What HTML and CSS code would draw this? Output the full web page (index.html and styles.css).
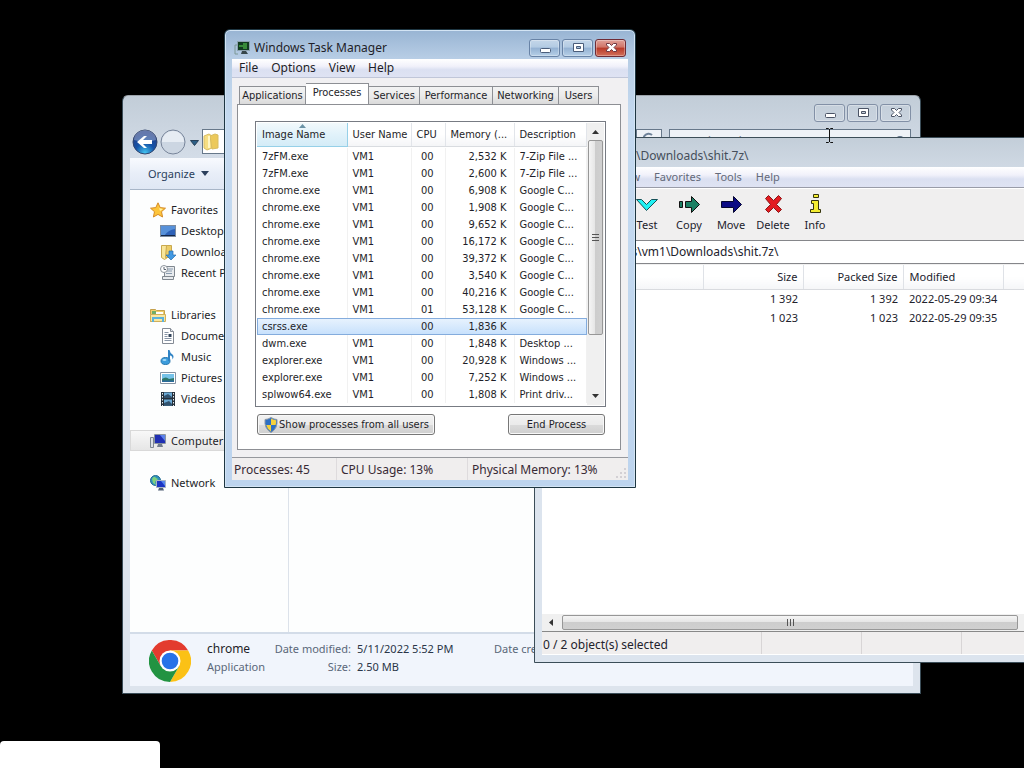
FILE: index.html
```html
<!DOCTYPE html>
<html lang="en">
<head>
    <meta charset="UTF-8">
    <meta name="viewport" content="width=device-width, initial-scale=1.0">
    <title>Desktop</title>
    <link rel="stylesheet" href="styles.css">
</head>
<body>
    <div class="desktop">

        <!-- Explorer -->
        <section class="window explorer">
            <div class="title-bar">
                <div class="window-buttons">
                    <button aria-label="Minimize"><svg width="14" height="14"><rect x="2.5" y="7.500" width="10" height="4" rx="1" fill="#fff" stroke="#4a5365"/></svg></button>
                    <button aria-label="Maximize"><svg width="14" height="14"><path d="M2.500 2.500h10v8h-10zM5.500 5.500h4v2h-4z" fill="#fff" fill-rule="evenodd" stroke="#4a5365"/></svg></button>
                    <button aria-label="Close"><svg width="14" height="14"><path d="M2.500 2.500h3l2 2 2-2h3v1.500L10 6.500l2.500 2.500v1.500h-3l-2-2-2 2h-3V9L5 6.500 2.500 4z" fill="#fff" stroke="#4a5365"/></svg></button>
                </div>
            </div>
            <div class="nav-bar">
                <button class="round" aria-label="Back"><svg width="26" height="26"><defs><radialGradient id="back" cx=".5" cy=".95" r=".8"><stop offset="0" stop-color="#43c6f2"/><stop offset=".5" stop-color="#1553a8"/><stop offset="1" stop-color="#23408a"/></radialGradient></defs><circle cx="13" cy="13" r="12" fill="url(#back)" stroke="#33466e"/><path d="M2 11a11 10 0 0 1 22 0q-11 3-22 0" fill="#fff" opacity=".3"/><path d="M5 13l7-6h3l-4 4h9v4h-9l4 4h-3z" fill="#fff"/></svg></button>
                <button class="round" aria-label="Forward"><svg width="26" height="26"><circle cx="13" cy="13" r="12" fill="#ccd6e2" stroke="#78859a"/><path d="M2 13a11 11 0 0 1 22 0z" fill="#e6ecf3"/></svg></button>
                <button class="recent" aria-label="Recent pages"><svg width="9" height="6"><path d="M.5.5h8l-4 5z" fill="#2c5f86" stroke="#274058"/></svg></button>
                <div class="address">
                    <svg width="16" height="18"><path d="M1 3l5-2 3 2v12l-5 2-3-2z" fill="#f6de83" stroke="#d9bd62"/><path d="M7 3l5-2 3 1v13l-6 1z" fill="#ecc95b" stroke="#d9bd62"/><path d="M6 3v12" stroke="#fff5c2" stroke-width="2"/></svg>
                    <button class="refresh" aria-label="Refresh"><svg width="12" height="14"><path d="M9 3a5 5 0 1 0 1 6" fill="none" stroke="#6e8299" stroke-width="2"/></svg></button>
                </div>
                <label class="search"><input type="search" aria-label="Search Application" placeholder="Search Application"><svg width="12" height="14"><circle cx="6" cy="6" r="4" fill="none" stroke="#5e7188" stroke-width="2"/></svg></label>
            </div>
            <div class="command-bar">
                <button>Organize <svg width="8" height="5"><path d="M0 0h8L4 5z" fill="#2b3f5c"/></svg></button>
            </div>
            <div class="explorer-body">
                <nav class="sidebar">
                    <div class="group">
                        <a href="#"><svg width="16" height="16"><path d="M8 .8l2.200 4.800 5.300.6-4 3.500 1.100 5.300L8 12.400 3.400 15l1.100-5.300-4-3.500 5.300-.6z" fill="#fdc53b" stroke="#d58b28"/><path d="M8 3l1.200 3.300L13 7l-3 2z" fill="#fff3a3"/></svg>Favorites</a>
                        <a href="#" class="child"><svg width="16" height="16"><rect x=".5" y="2.500" width="15" height="11" fill="#2e62b8" stroke="#7c8ca0"/><path d="M1 3h14v3Q8 7 4 13H1z" fill="#5791d9"/><path d="M1 12.500h14" stroke="#142748"/></svg>Desktop</a>
                        <a href="#" class="child"><svg width="16" height="16"><path d="M1.500 1.500h6v12l-3 2-3-2z" fill="#f8e69a" stroke="#c9a94f"/><path d="M6.500 1.500h5v12h-6z" fill="#eccd67" stroke="#c9a94f"/><path d="M9 7h4v4h3l-5 5-5-5h3z" fill="#4199e3" stroke="#286fac" stroke-width=".7"/></svg>Downloads</a>
                        <a href="#" class="child"><svg width="16" height="16"><path d="M4.500 1.500h10v10h-10zM2.500 11.500h11v3h-11z" fill="#e8ebee" stroke="#808890"/><path d="M6 6h6M6 8.500h6M8 4h5" stroke="#899bae"/><circle cx="4" cy="4" r="3.500" fill="#fff" stroke="#8b939b"/><path d="M4 2v2.500h2" fill="none" stroke="#58636f"/></svg>Recent Places</a>
                    </div>
                    <div class="group">
                        <a href="#"><svg width="16" height="16"><path d="M.5 2.500h5l1 1h8v11H.5z" fill="#f0cf6c" stroke="#c5a14d"/><path d="M2 4h4v3H2z" fill="#71ad68"/><path d="M6 5h7v3H6z" fill="#fff"/><path d="M.5 7.500h15v7H.5z" fill="#f9e7a0" stroke="#d0b05b"/><path d="M3 15v-4h10v4" fill="none" stroke="#5bb2dd" stroke-width="2"/></svg>Libraries</a>
                        <a href="#" class="child"><svg width="16" height="16"><path d="M2.500.5h8l3 3v12h-11z" fill="#fff" stroke="#848b95"/><path d="M10.500.5v3h3" fill="#dde2ea" stroke="#848b95"/><path d="M4.500 4.500h4M4.500 6.500h3M4.500 8.500h3M4.500 10.500h7M4.500 12.500h7" stroke="#8794a5"/><path d="M8.500 6h3v3h-3z" fill="#33455c"/></svg>Documents</a>
                        <a href="#" class="child"><svg width="16" height="16"><ellipse cx="5.500" cy="12" rx="4.500" ry="3.500" fill="#3b9cdc" stroke="#2576ae"/><path d="M8 12V1h1.500q.5 3 3 4.500 2 2 0 5 0-4-2.500-4V12z" fill="#2f83c4"/><ellipse cx="4.500" cy="11" rx="2" ry="1" fill="#a3daf8"/></svg>Music</a>
                        <a href="#" class="child"><svg width="16" height="16"><path d="M.5 2.500h15v11H.5z" fill="#fff" stroke="#8492a2"/><path d="M2 4h12v8H2z" fill="#75c2e8"/><path d="M2 9q4-3 7 0l5-1v4H2z" fill="#2e7769"/><path d="M2 10.500h12V12H2z" fill="#2a6a9c"/></svg>Pictures</a>
                        <a href="#" class="child"><svg width="16" height="16"><path d="M1 1h14v14H1z" fill="#25303b"/><path d="M4 1.500h8V7H4zM4 8.500h8v6H4z" fill="#6baad5"/><path d="M4 5l4-2 4 3v1H4zM4 12l5-2 3 3v1.500H4z" fill="#31526f"/><path d="M2.500 2v13M13.500 2v13" stroke="#e9edf0" stroke-dasharray="1.500 1.500"/></svg>Videos</a>
                    </div>
                    <div class="group">
                        <a href="#" class="current"><svg width="16" height="16"><path d="M.5 4.500h3v10h-3z" fill="#dce1e7" stroke="#7d8792"/><path d="M4.500 1.500h11v9h-11z" fill="#fff" stroke="#8993a0"/><path d="M5 2h10v8H5z" fill="#202fb3"/><path d="M10 2h5v6z" fill="#5c82ea"/><path d="M8 11h4l1 3H7z" fill="#717c8c"/></svg>Computer</a>
                    </div>
                    <div class="group">
                        <a href="#"><svg width="16" height="16"><circle cx="5.500" cy="5.500" r="5" fill="#2f91bd" stroke="#226b90"/><path d="M2 4q2-4 4-1l2 1-3 3 1 3-3-2z" fill="#80d17e"/><path d="M6.500 5.500h9v7h-9z" fill="#1c35c4" stroke="#a9b4c4"/><path d="M11 6h4v5z" fill="#5787ef"/><path d="M9 13h4l1 2.500H8z" fill="#536177"/></svg>Network</a>
                    </div>
                </nav>
                <main class="file-area"></main>
            </div>
            <div class="details">
                <svg class="chrome-logo" viewBox="0 0 48 48"><circle cx="24" cy="24" r="24" fill="#fff"/><path d="M24 12h20.800A24 24 0 0 0 3.200 12l10.400 18z" fill="#e33b2e"/><path d="M34.400 30L24 48A24 24 0 0 0 44.800 12H24z" fill="#fbc116"/><path d="M13.600 30L3.200 12A24 24 0 0 0 24 48l10.400-18z" fill="#229342"/><circle cx="24" cy="24" r="12" fill="#fff"/><circle cx="24" cy="24" r="9.500" fill="#2672e8"/></svg>
                <div class="file-name"><strong>chrome</strong><span>Application</span></div>
                <dl>
                    <dt>Date modified:</dt><dd>5/11/2022 5:52 PM</dd>
                    <dt>Size:</dt><dd>2.50 MB</dd>
                </dl>
                <span class="created">Date created:</span>
            </div>
        </section>

        <!-- 7-Zip -->
        <section class="window archive">
            <div class="title-bar"><h2>\Downloads\shit.7z\</h2></div>
            <div class="menu-bar">
                <button>View</button><button>Favorites</button><button>Tools</button><button>Help</button>
            </div>
            <div class="toolbar">
                <button><svg width="24" height="24"><path d="M1.500 7.500h5l5 5 5-5h6l-11 11z" fill="#1ff2f4" stroke="#165057"/></svg>Test</button>
                <button><svg width="24" height="24"><path d="M2.500 9.500h3v6h-3zM8.500 9.500h6v-5l8 8-8 8v-5h-6z" fill="#1c8064" stroke="#111"/></svg>Copy</button>
                <button><svg width="24" height="24"><path d="M2.500 9.500h12v-5l8 8-8 8v-5h-12z" fill="#0b0a84" stroke="#050530"/></svg>Move</button>
                <button><svg width="24" height="24"><path d="M4.500 6.500l3-3 5 5 5-5 3 3-5 6 5 5-3 3-5-5-5 5-3-3 5-5z" fill="#e31b20" stroke="#8b1517"/></svg>Delete</button>
                <button><svg width="24" height="24"><path d="M10.500 2.500h5v3h-5zM8.500 8.500h7v9h2v3h-10v-3h3v-6h-2z" fill="#f4ed32" stroke="#35340e"/></svg>Info</button>
            </div>
            <div class="path-row"><input type="text" aria-label="Path" value="C:\Users\vm1\Downloads\shit.7z\"></div>
            <div class="archive-list">
                <table>
                    <thead>
                        <tr><th class="name"></th><th>Size</th><th>Packed Size</th><th class="modified">Modified</th><th class="rest"></th></tr>
                    </thead>
                    <tbody>
                        <tr><td></td><td>1 392</td><td>1 392</td><td class="modified">2022-05-29 09:34</td><td></td></tr>
                        <tr><td></td><td>1 023</td><td>1 023</td><td class="modified">2022-05-29 09:35</td><td></td></tr>
                    </tbody>
                </table>
            </div>
            <div class="scroll-x">
                <svg width="17" height="9"><path d="M11 1v7L7 4.500z" fill="#333"/></svg>
                <div class="thumb"><svg width="9" height="7"><path d="M1.500 0v7M4.500 0v7M7.500 0v7" stroke="#555"/></svg></div>
                <svg width="17" height="9"><path d="M7 1v7l4-3.500z" fill="#333"/></svg>
            </div>
            <div class="status-bar"><span>0 / 2 object(s) selected</span><span></span><span></span><span></span></div>
        </section>

        <!-- Task Manager -->
        <section class="window task-manager">
            <div class="title-bar">
                <svg width="16" height="16"><path d="M3.500 1.500h12v9h-12z" fill="#123b20" stroke="#8da3b0"/><path d="M5 5h4V3h4v6H9V7H5z" fill="#378b38"/><path d="M8 11h4l2 3H7z" fill="#36464a"/><path d="M3 5H1v9h3" fill="none" stroke="#7c9895"/></svg>
                <h2>Windows Task Manager</h2>
                <div class="window-buttons">
                    <button aria-label="Minimize"><svg width="14" height="14"><rect x="2.500" y="7.500" width="10" height="4" rx="1" fill="#fff" stroke="#4a5d7a"/></svg></button>
                    <button aria-label="Maximize"><svg width="14" height="14"><path d="M2.500 2.500h10v8h-10zM5.500 5.500h4v2h-4z" fill="#fff" fill-rule="evenodd" stroke="#4a5d7a"/></svg></button>
                    <button class="close" aria-label="Close"><svg width="14" height="14"><path d="M2.500 2.500h3l2 2 2-2h3v1.500L10 6.500l2.500 2.500v1.500h-3l-2-2-2 2h-3V9L5 6.500 2.500 4z" fill="#fff" stroke="#703a44"/></svg></button>
                </div>
            </div>
            <div class="menu-bar">
                <button>File</button><button>Options</button><button>View</button><button>Help</button>
            </div>
            <div class="tab-area">
                <div class="tabs" role="tablist">
                    <button role="tab">Applications</button>
                    <button role="tab" class="active" aria-selected="true">Processes</button>
                    <button role="tab">Services</button>
                    <button role="tab">Performance</button>
                    <button role="tab">Networking</button>
                    <button role="tab">Users</button>
                </div>
                <div class="tab-panel">
                    <div class="process-list">
                        <table>
                            <thead>
                                <tr><th class="image sorted"><svg class="sort" width="7" height="4"><path d="M0 4l3.500-4L7 4z" fill="#6b93a6"/></svg>Image Name</th><th class="user">User Name</th><th class="cpu">CPU</th><th class="memory">Memory (...</th><th>Description</th></tr>
                            </thead>
                            <tbody>
                                <tr><td>7zFM.exe</td><td>VM1</td><td>00</td><td>2,532 K</td><td>7-Zip File ...</td></tr>
                                <tr><td>7zFM.exe</td><td>VM1</td><td>00</td><td>2,600 K</td><td>7-Zip File ...</td></tr>
                                <tr><td>chrome.exe</td><td>VM1</td><td>00</td><td>6,908 K</td><td>Google C...</td></tr>
                                <tr><td>chrome.exe</td><td>VM1</td><td>00</td><td>1,908 K</td><td>Google C...</td></tr>
                                <tr><td>chrome.exe</td><td>VM1</td><td>00</td><td>9,652 K</td><td>Google C...</td></tr>
                                <tr><td>chrome.exe</td><td>VM1</td><td>00</td><td>16,172 K</td><td>Google C...</td></tr>
                                <tr><td>chrome.exe</td><td>VM1</td><td>00</td><td>39,372 K</td><td>Google C...</td></tr>
                                <tr><td>chrome.exe</td><td>VM1</td><td>00</td><td>3,540 K</td><td>Google C...</td></tr>
                                <tr><td>chrome.exe</td><td>VM1</td><td>00</td><td>40,216 K</td><td>Google C...</td></tr>
                                <tr><td>chrome.exe</td><td>VM1</td><td>01</td><td>53,128 K</td><td>Google C...</td></tr>
                                <tr class="selected"><td>csrss.exe</td><td></td><td>00</td><td>1,836 K</td><td></td></tr>
                                <tr><td>dwm.exe</td><td>VM1</td><td>00</td><td>1,848 K</td><td>Desktop ...</td></tr>
                                <tr><td>explorer.exe</td><td>VM1</td><td>00</td><td>20,928 K</td><td>Windows ...</td></tr>
                                <tr><td>explorer.exe</td><td>VM1</td><td>00</td><td>7,252 K</td><td>Windows ...</td></tr>
                                <tr><td>splwow64.exe</td><td>VM1</td><td>00</td><td>1,808 K</td><td>Print driv...</td></tr>
                            </tbody>
                        </table>
                        <div class="scroll-y">
                            <svg width="9" height="17"><path d="M1 11h7L4.500 7z" fill="#333"/></svg>
                            <div class="thumb"><svg width="7" height="9"><path d="M0 1.500h7M0 4.500h7M0 7.500h7" stroke="#555"/></svg></div>
                            <svg width="9" height="17"><path d="M1 6h7l-3.500 4z" fill="#333"/></svg>
                        </div>
                    </div>
                    <div class="actions">
                        <button class="show-all"><svg width="16" height="16"><path d="M8 .5q3 2 6 2 1 9-6 13-7-4-6-13 3 0 6-2z" fill="#2d6fc4" stroke="#8b98a6"/><path d="M8 1.500q3 1.500 5 1.700.3 2.800-.4 4.800H8z" fill="#f6d13c"/><path d="M3.200 8H8v6.500Q4.500 12.500 3.200 8z" fill="#f6d13c"/></svg>Show processes from all users</button>
                        <button class="end">End Process</button>
                    </div>
                </div>
            </div>
            <div class="status-bar"><span>Processes: 45</span><span>CPU Usage: 13%</span><span>Physical Memory: 13%</span><svg width="10" height="10"><path d="M8 0h2v2H8zM4 4h2v2H4zM8 4h2v2H8zM0 8h2v2H0zM4 8h2v2H4zM8 8h2v2H8z" fill="#d3d0d4"/></svg></div>
        </section>

        <div class="link-bubble"></div>
        <svg class="cursor" width="9" height="17"><path d="M1 1.500h2.500l1 1 1-1H8M4.500 2v13M1 15.500h2.500l1-1 1 1H8" fill="none" stroke="#111"/></svg>
    </div>
</body>
</html>
```
FILE: styles.css
```css
* {
    box-sizing: border-box;
}
body {
    margin: 0;
    background: #000;
    font-family: "Noto Sans", "Open Sans", sans-serif;
    font-size: 12px;
    line-height: 18px;
    color: #1e1e28;
}
button, input {
    font: inherit;
    color: inherit;
    padding: 0;
    border: none;
    background: none;
}
h2 {
    margin: 0;
    font-size: 12px;
    font-weight: normal;
}
table {
    border-collapse: collapse;
    table-layout: fixed;
    width: 100%;
}
th, td {
    padding: 0;
    font-weight: normal;
    text-align: left;
    white-space: nowrap;
}
svg {
    flex: none;
}
.desktop {
    position: relative;
    height: 100vh;
    overflow: hidden;
}
.window {
    position: absolute;
    display: flex;
    flex-direction: column;
    border: 1px solid #3b4d58;
    border-radius: 6px 6px 0 0;
    padding: 0 7px 7px;
}
.title-bar {
    display: flex;
    align-items: center;
    flex: none;
}
.window-buttons {
    display: flex;
    gap: 2px;
    margin-left: auto;
}
.window-buttons button {
    display: flex;
    align-items: center;
    justify-content: center;
    width: 31px;
    height: 18px;
    border: 1px solid #8290a6;
    border-radius: 3px;
    box-shadow: inset 0 0 0 1px rgba(255, 255, 255, 0.3);
}
.menu-bar {
    display: flex;
    flex: none;
    background: linear-gradient(#fff, #f1f1fa 40%, #dbe0f1 60%, #dfe3f3);
}
.menu-bar button {
    white-space: nowrap;
}
.status-bar {
    display: flex;
    flex: none;
    background: #f0eeee;
}
.sidebar, .command-bar, .details, .toolbar, .archive-list, .archive .menu-bar {
    font-size: 11px;
}

/* Explorer */
.explorer {
    left: 122px;
    top: 95px;
    width: 799px;
    height: 599px;
    background: linear-gradient(#c2cdd8, #d3dce7 60px, #dde4ed 120px);
    border-top-color: #9da4ab;
}
.explorer .title-bar {
    height: 33px;
    padding: 0 2px;
}
.nav-bar {
    display: flex;
    align-items: center;
    flex: none;
    height: 25px;
    gap: 2px;
    margin-bottom: 4px;
    padding: 0 2px;
}
.round {
    width: 26px;
    height: 26px;
}
.round svg {
    display: block;
}
.recent {
    width: 12px;
    height: 20px;
}
.address, .search {
    display: flex;
    align-items: center;
    height: 25px;
    border: 1px solid #67788a;
    background: #eef2f7;
}
.address {
    flex: 1;
    justify-content: space-between;
    background: #fff;
}
.refresh {
    width: 25px;
    height: 23px;
    border-left: 1px solid #67788a;
    background: #eef2f7;
}
.search {
    width: 242px;
    margin-left: 5px;
    padding: 0 4px 0 8px;
}
.search input {
    flex: 1;
    min-width: 0;
    font-style: italic;
}
.search input::placeholder {
    color: #76808c;
}
.command-bar {
    flex: none;
    height: 32px;
    padding-left: 18px;
    background: linear-gradient(#f8fafe, #e8eef8 50%, #dfe7f4);
    border-bottom: 1px solid #a8b6c8;
    color: #2b3f5c;
}
.command-bar button {
    display: flex;
    align-items: center;
    gap: 6px;
    height: 31px;
}
.explorer-body {
    display: flex;
    flex: 1;
    background: #fdfefe;
}
.sidebar {
    width: 159px;
    padding-top: 9px;
    border-right: 1px solid #dce2ea;
}
.group {
    margin-bottom: 21px;
}
.sidebar a {
    display: flex;
    align-items: center;
    gap: 5px;
    height: 21px;
    padding-left: 20px;
    color: #1e1e28;
    text-decoration: none;
    white-space: nowrap;
}
.sidebar .child {
    padding-left: 30px;
}
.sidebar .current {
    border: 1px solid #d9d9d9;
    padding-left: 19px;
    background: linear-gradient(#f8f8f8, #e6e6e6);
}
.file-area {
    flex: 1;
}
.details {
    display: flex;
    flex: none;
    height: 54px;
    padding: 6px 19px;
    border-top: 2px solid #d3dce8;
    background: #f1f5fc;
    color: #5a6779;
    white-space: nowrap;
}
.chrome-logo {
    width: 42px;
    height: 42px;
}
.file-name {
    display: flex;
    flex-direction: column;
    width: 67px;
    margin-left: 16px;
}
.file-name strong {
    font-size: 12px;
    font-weight: normal;
    color: #1e1e28;
}
.details dl {
    display: grid;
    grid-template-columns: 77px 132px;
    grid-auto-rows: 18px;
    column-gap: 6px;
    margin: 0 5px 0 0;
}
.details dt {
    text-align: right;
}
.details dd {
    margin: 0;
    color: #2a3548;
}

/* 7-Zip */
.archive {
    left: 534px;
    top: 137px;
    width: 511px;
    height: 526px;
    background: linear-gradient(#c3ced9, #dce4ee 60px);
    color: #22222c;
}
.archive .title-bar {
    height: 29px;
    padding: 6px 0 0 94px;
    color: #454e5a;
}
.archive .menu-bar {
    height: 21px;
    gap: 14px;
    padding-left: 74px;
    border-bottom: 1px solid #999ca8;
    color: #646a7a;
}
.toolbar {
    display: flex;
    flex: none;
    height: 52px;
    padding-left: 84px;
    border-top: 1px solid #fff;
    background: #f0efef;
}
.toolbar button {
    display: flex;
    flex-direction: column;
    align-items: center;
    width: 42px;
    padding-top: 3px;
}
.path-row {
    flex: none;
    height: 24px;
    border: solid #85868a;
    border-width: 1px 0;
    background: #fff;
}
.path-row input {
    width: 100%;
    height: 21px;
    padding-left: 48px;
    outline: none;
}
.archive-list {
    flex: 1;
    border-top: 1px solid #f0f0f0;
    background: #fff;
}
.archive-list th, .archive-list td {
    width: 100px;
    height: 19px;
    padding-right: 5px;
    text-align: right;
}
.archive-list th {
    height: 24px;
    border-right: 1px solid #dfe2e7;
    border-bottom: 1px solid #d9dbdf;
    background: linear-gradient(#fff 50%, #f5f6f8);
}
.archive-list .name {
    width: 161px;
}
.archive-list .rest {
    width: auto;
}
.archive-list .modified {
    padding: 0 0 0 6px;
    text-align: left;
}
.scroll-x {
    display: flex;
    align-items: center;
    flex: none;
    height: 18px;
    background: #f0f0f0;
    border-bottom: 1px solid #888;
}
.thumb {
    display: flex;
    align-items: center;
    justify-content: center;
    flex: 1;
    border: 1px solid #979797;
    border-radius: 2px;
}
.scroll-x .thumb {
    height: 15px;
    margin: 0 2px 0 3px;
    background: linear-gradient(#f5f5f5, #e6e6e6 45%, #cdcdcd 50%, #d0d0d0);
}
.archive .status-bar {
    height: 23px;
    border-bottom: 1px solid #fff;
}
.archive .status-bar span {
    flex: none;
    width: 100px;
    padding-left: 1px;
    line-height: 25px;
    border-right: 1px solid #d8d5d6;
}
.archive .status-bar span:first-child {
    width: 220px;
}

/* Task Manager */
.task-manager {
    left: 224px;
    top: 29px;
    width: 412px;
    height: 459px;
    background: linear-gradient(#98b4d3, #b7cde5 28px, #c5daf0 90px, #bdd4ee);
    border-color: #1e3642;
    box-shadow: inset 0 0 0 1px #d3e4f4;
}
.task-manager .title-bar {
    height: 29px;
    padding: 6px 2px 0;
    gap: 4px;
}
.task-manager .window-buttons button {
    border-color: #6883a6;
    background: linear-gradient(#c4d6e9, #b3cbe3 45%, #93b1d2 50%, #b6cfe7);
}
.task-manager .window-buttons .close {
    border-color: #6f2b35;
    background: linear-gradient(#e0a199, #d07467 45%, #b83928 50%, #d2705b);
}
.task-manager .menu-bar {
    height: 19px;
    gap: 13px;
    padding-left: 7px;
    border-bottom: 1px solid #c0c6d8;
}
.tab-area {
    display: flex;
    flex-direction: column;
    flex: 1;
    padding: 5px 7px 7px 5px;
    background: #f1f0f2;
    font-family: "DejaVu Sans Condensed", "DejaVu Sans", sans-serif;
    font-size: 11px;
    line-height: 17px;
}
.tabs {
    display: grid;
    grid-template-columns: 67px 63px 51px 73px 66px 40px;
    align-items: end;
    padding-left: 2px;
}
.tabs button {
    height: 18px;
    border: 1px solid #8d8f94;
    border-bottom: none;
    border-left-width: 0;
    background: linear-gradient(#f3f3f3, #ebebeb 50%, #dadada);
    white-space: nowrap;
}
.tabs button:first-child {
    border-left-width: 1px;
}
.tabs .active {
    height: 21px;
    background: #fff;
    padding-bottom: 3px;
    box-shadow: 0 1px #fff;
}
.tab-panel {
    display: flex;
    flex-direction: column;
    flex: 1;
    padding: 16px 14px 14px 17px;
    border: 1px solid #8d8f94;
    background: #fff;
}
.process-list {
    display: flex;
    height: 286px;
    padding: 1px;
    border: 1px solid #777b83;
}
.process-list table {
    flex: 1;
    width: 331px;
    align-self: flex-start;
}
.process-list th {
    height: 23px;
    padding-left: 5px;
    border-right: 1px solid #e2e5ea;
    border-bottom: 1px solid #d9dce0;
    background: linear-gradient(#fff 50%, #f4f5f7);
}
.process-list td {
    height: 17px;
    padding: 0 7px 0 5px;
    border-right: 1px solid #f1f1f1;
}
.process-list tbody::before {
    content: "";
    display: block;
    height: 1px;
}
.process-list .image {
    width: 90px;
}
.process-list .sorted {
    position: relative;
    border-color: #96d0e8;
    background: linear-gradient(#f2f9fc, #e1f2fa 50%, #d4ecf7);
}
.sort {
    position: absolute;
    left: 42px;
    top: 1px;
}
.process-list .user {
    width: 64px;
}
.process-list .cpu {
    width: 34px;
}
.process-list .memory {
    width: 69px;
}
.process-list td:nth-child(3), .process-list td:nth-child(4) {
    text-align: right;
}
.process-list td:nth-child(3) {
    padding-right: 11px;
}
.process-list td:last-child {
    padding-right: 0;
}
.process-list .selected {
    outline: 1px solid #84acdd;
    outline-offset: -1px;
    background: linear-gradient(#e9f3fe, #c6e0fc);
}
.process-list .selected td {
    border-color: transparent;
}
.scroll-y {
    display: flex;
    flex-direction: column;
    align-items: center;
    width: 17px;
    background: #f0f0f0;
}
.scroll-y .thumb {
    flex: none;
    width: 15px;
    height: 195px;
    margin-bottom: auto;
    background: linear-gradient(90deg, #f5f5f5, #e6e6e6 45%, #cdcdcd 50%, #d0d0d0);
}
.actions {
    display: flex;
    justify-content: space-between;
    padding: 7px 1px 0 2px;
}
.actions button {
    display: flex;
    align-items: center;
    justify-content: center;
    width: 97px;
    height: 21px;
    border: 1px solid #777;
    border-radius: 3px;
    background: linear-gradient(#f2f2f2, #ebebeb 50%, #dbdbdb 52%, #cfcfcf);
    box-shadow: inset 0 0 0 1px #f8f8f8;
    white-space: nowrap;
}
.actions .show-all {
    width: 178px;
}
.task-manager .status-bar {
    height: 23px;
    border-top: 1px solid #96989d;
    color: #382a35;
}
.task-manager .status-bar span {
    width: 131px;
    padding-left: 4px;
    line-height: 23px;
    border-right: 1px solid #dedbdd;
    white-space: nowrap;
}
.task-manager .status-bar span:first-child {
    width: 105px;
    padding-left: 2px;
}
.task-manager .status-bar span:nth-child(3) {
    flex: 1;
    border: none;
}
.task-manager .status-bar svg {
    align-self: flex-end;
    margin: 0 2px 2px 0;
}

.link-bubble {
    position: absolute;
    left: 0;
    bottom: 0;
    width: 160px;
    height: 27px;
    border-radius: 4px 4px 0 0;
    background: #fff;
}
.cursor {
    position: absolute;
    left: 825px;
    top: 127px;
}
```
